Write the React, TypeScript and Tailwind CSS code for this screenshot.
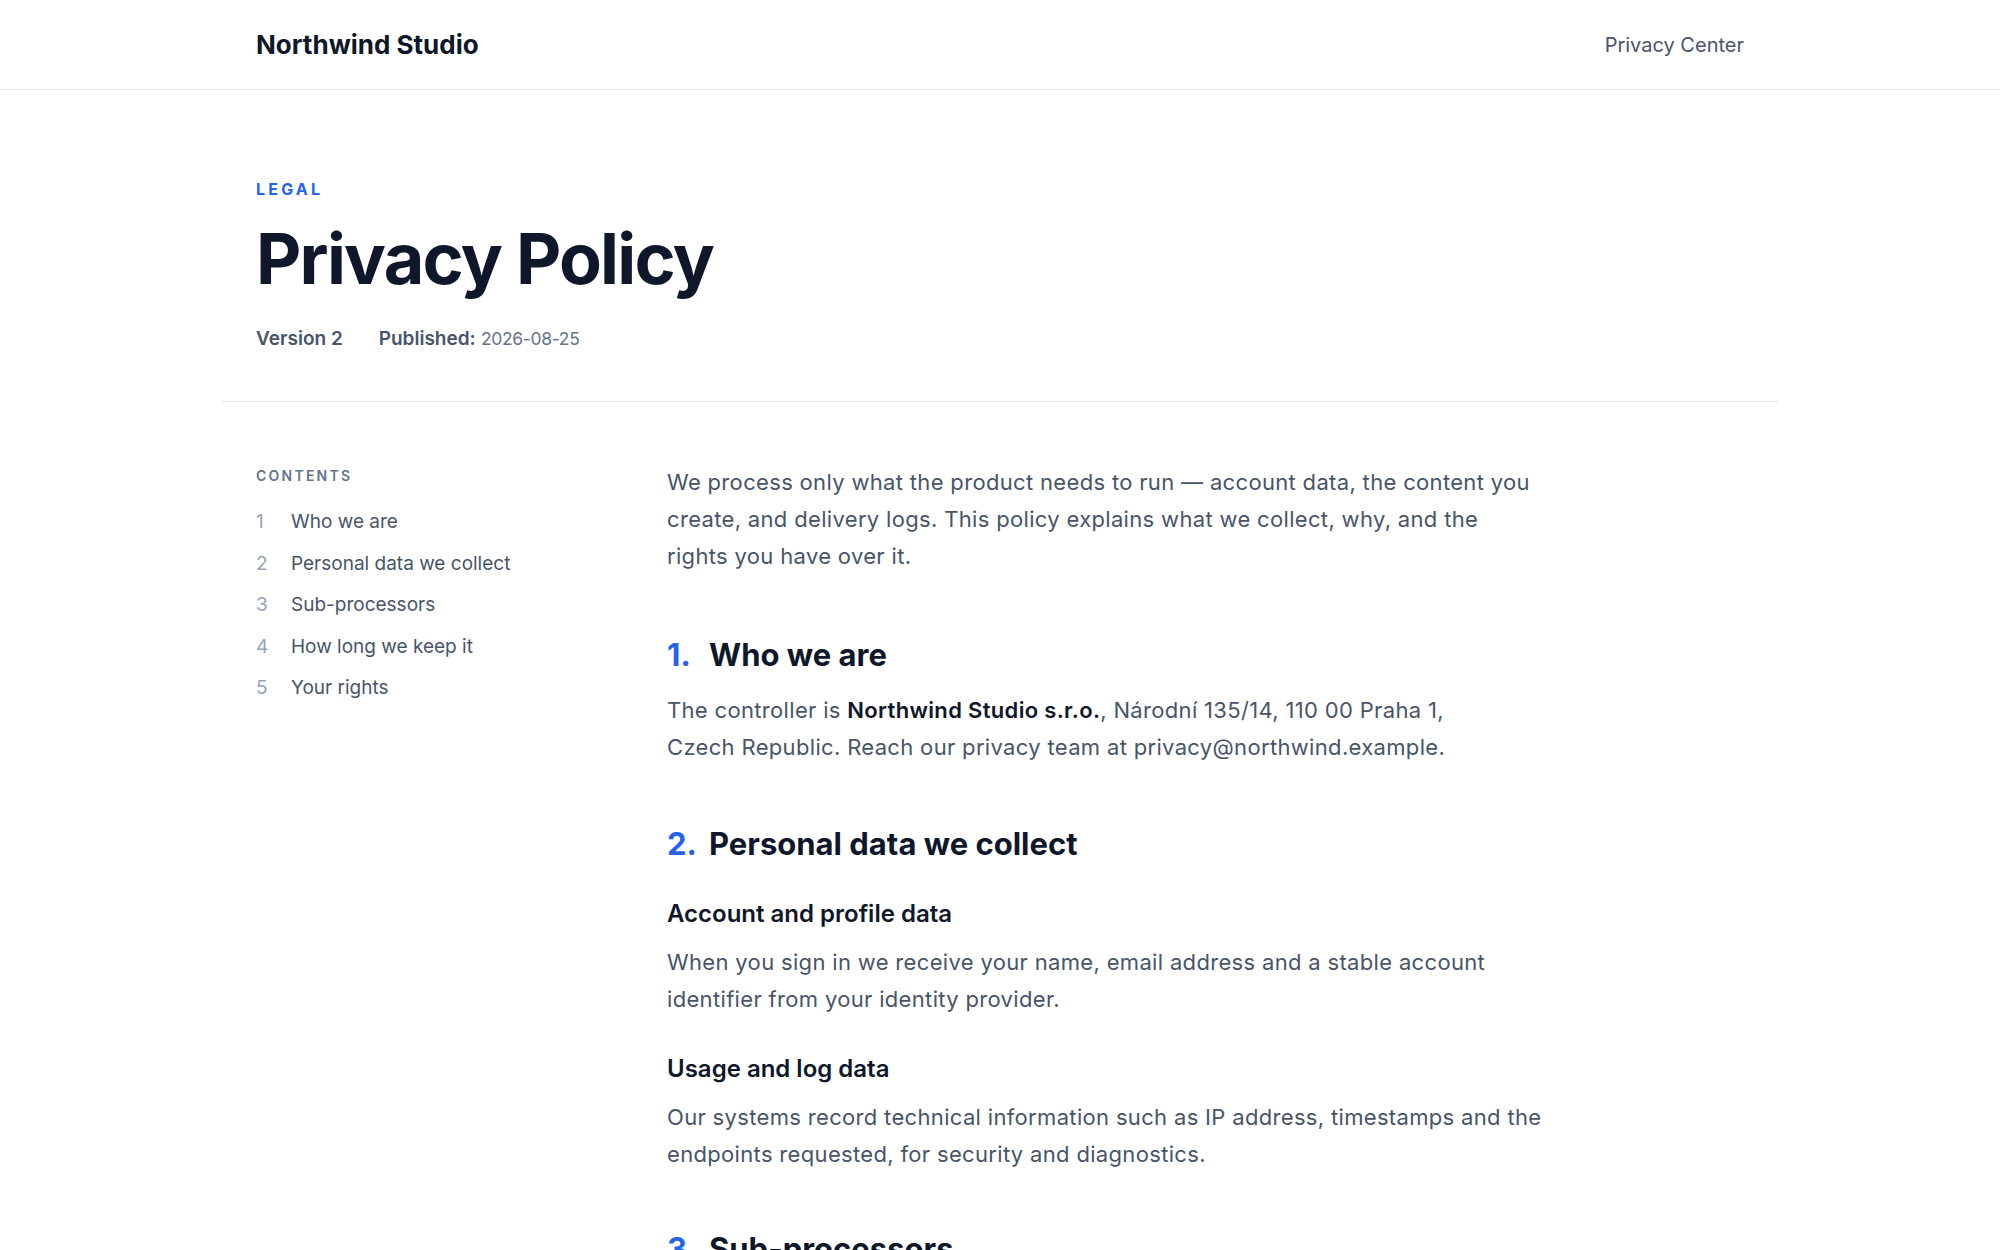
import React from "react";

const toc = [
  { n: 1, label: "Who we are" },
  { n: 2, label: "Personal data we collect" },
  { n: 3, label: "Sub-processors" },
  { n: 4, label: "How long we keep it" },
  { n: 5, label: "Your rights" },
];

function SectionHeading({ n, children }: { n: number; children: React.ReactNode }) {
  return (
    <h2 className="flex items-baseline text-[31px] leading-[40px] font-bold text-[#0f172a]">
      <span className="w-[42px] shrink-0 text-[#2563eb]">{n}.</span>
      <span>{children}</span>
    </h2>
  );
}

function SubHeading({ children }: { children: React.ReactNode }) {
  return <h3 className="text-[24px] leading-[30px] font-semibold text-[#0f172a]">{children}</h3>;
}

function Para({ children }: { children: React.ReactNode }) {
  return <p className="text-[22px] leading-[37px] tracking-[0.015em] text-[#475569]">{children}</p>;
}

export default function App() {
  return (
    <div className="min-h-screen bg-white" style={{ fontFamily: "Inter, 'Noto Sans', sans-serif" }}>
      <header className="border-b border-[#e5e7eb]">
        <div className="mx-auto flex h-[89px] max-w-[1556px] items-center justify-between px-[34px]">
          <a className="text-[26px] font-bold text-[#0f172a]">Northwind Studio</a>
          <nav>
            <a className="text-[20px] text-[#475569]">Privacy Center</a>
          </nav>
        </div>
      </header>

      <main className="mx-auto max-w-[1556px]">
        <section className="px-[34px] pt-[89px] pb-[48px]">
          <p className="text-[16px] leading-[20px] font-bold uppercase tracking-[0.2em] text-[#2563eb]">Legal</p>
          <h1 className="mt-[20px] text-[70px] leading-[79px] font-bold tracking-tight text-[#0f172a]">
            Privacy Policy
          </h1>
          <div className="mt-[27px] flex items-center gap-[36px] text-[19px] leading-[28px] text-[#475569]">
            <span className="font-semibold">Version 2</span>
            <span>
              <span className="font-semibold">Published:</span>{" "}
              <span className="text-[17.5px] tracking-[-0.02em] text-[#64748b]">2026-08-25</span>
            </span>
          </div>
        </section>

        <hr className="border-t border-[#e5e7eb]" />

        <div className="flex gap-[111px] px-[34px] pt-[62px] pb-[80px]">
          <aside className="w-[300px] shrink-0 pt-[2px]">
            <p className="text-[14px] leading-[20px] font-semibold uppercase tracking-[0.16em] text-[#64748b]">
              Contents
            </p>
            <ol className="mt-[22px] flex flex-col gap-[13.5px]">
              {toc.map((t) => (
                <li key={t.n} className="flex text-[19px] leading-[28px]">
                  <span className="w-[35px] text-[#94a3b8]">{t.n}</span>
                  <a className="text-[#475569]">{t.label}</a>
                </li>
              ))}
            </ol>
          </aside>

          <article className="max-w-[960px]">
            <Para>
              We process only what the product needs to run — account data, the content you
              <br />
              create, and delivery logs. This policy explains what we collect, why, and the
              <br />
              rights you have over it.
            </Para>

            <section className="mt-[60px]">
              <SectionHeading n={1}>Who we are</SectionHeading>
              <div className="mt-[17px]">
                <Para>
                  The controller is <strong className="font-semibold text-[#0f172a]">Northwind Studio s.r.o.</strong>,
                  Národní 135/14, 110 00 Praha 1,
                  <br />
                  Czech Republic. Reach our privacy team at privacy@northwind.example.
                </Para>
              </div>
            </section>

            <section className="mt-[58px]">
              <SectionHeading n={2}>Personal data we collect</SectionHeading>
              <div className="mt-[35px]">
                <SubHeading>Account and profile data</SubHeading>
                <div className="mt-[15px]">
                  <Para>
                    When you sign in we receive your name, email address and a stable account
                    <br />
                    identifier from your identity provider.
                  </Para>
                </div>
              </div>
              <div className="mt-[36px]">
                <SubHeading>Usage and log data</SubHeading>
                <div className="mt-[15px]">
                  <Para>
                    Our systems record technical information such as IP address, timestamps and the
                    <br />
                    endpoints requested, for security and diagnostics.
                  </Para>
                </div>
              </div>
            </section>

            <section className="mt-[56px]">
              <SectionHeading n={3}>Sub-processors</SectionHeading>
              <div className="mt-[17px]">
                <Para>
                  We rely on a small set of vetted providers to host and deliver the service. Each is bound by a data
                  processing agreement.
                </Para>
              </div>
            </section>
          </article>
        </div>
      </main>
    </div>
  );
}
